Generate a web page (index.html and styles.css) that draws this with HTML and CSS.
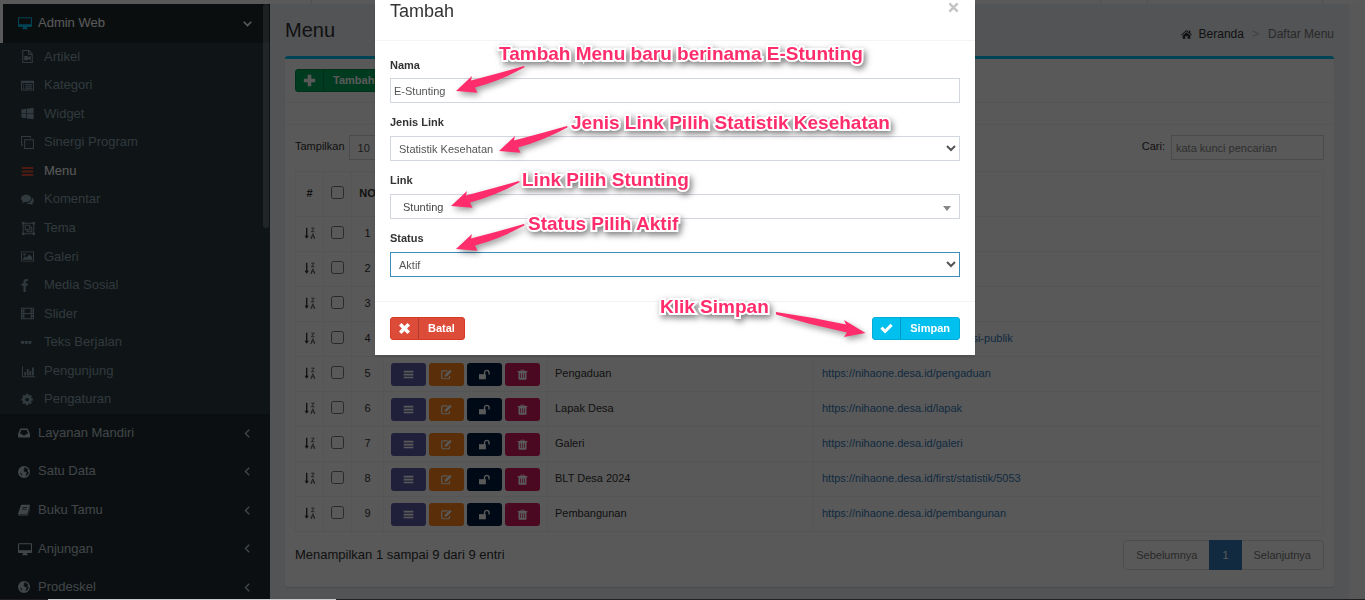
FILE: index.html
```html
<!DOCTYPE html>
<html lang="id">
<head>
    <meta charset="UTF-8">
    <meta name="viewport" content="width=device-width, initial-scale=1.0">
    <title>Menu</title>

    <link rel="stylesheet" href="styles.css">
</head>
<body>
    <!-- Kumpulan ikon -->
    <svg class="sprite" aria-hidden="true">
        <symbol id="i-desktop" viewBox="0 0 16 16"><path fill-rule="evenodd" d="M1.2 1.5h13.6c.7 0 1.2.5 1.2 1.2v8.6c0 .7-.5 1.2-1.2 1.2H10l.5 1.5h.6v1H4.9v-1h.6l.5-1.5H1.2C.5 12.500 0 12 0 11.300V2.700C0 2 .5 1.500 1.200 1.500zM1.200 2.700v6.600h13.600V2.700z"/></symbol>
        <symbol id="i-video" viewBox="0 0 16 16"><path fill-rule="evenodd" d="M1.500 0H10l4.500 4.500V16h-13zM2.800 1.300v13.400h10.400V6H8.700V1.300zM10 1.800v2.900h2.900zM4 7.500h4.700v1.600L12 7v6l-3.300-2.100v1.600H4z"/></symbol>
        <symbol id="i-list" viewBox="0 0 16 16"><path fill-rule="evenodd" d="M0 2h16v12H0zM1.200 5v7.800h13.600V5zM2.300 6h1.500v1.300H2.300zM5 6h8.700v1.300H5zM2.300 8.300h1.500v1.300H2.300zM5 8.300h8.700v1.300H5zM2.300 10.600h1.500v1.300H2.300zM5 10.600h8.700v1.300H5z"/></symbol>
        <symbol id="i-windows" viewBox="0 0 16 16"><path d="M.5 3l6-.9v5.500h-6zM7.300 2l8.200-1.200v6.800H7.300zM.5 8.400h6v5.500l-6-.9zM7.300 8.400h8.200v6.800L7.300 14z"/></symbol>
        <symbol id="i-clone" viewBox="0 0 16 16"><path fill="none" stroke="currentColor" stroke-width="1.300" d="M4.500 4.500h10.800v10.800H4.500zM2.500 11.500H.7V.7h10.800v2"/></symbol>
        <symbol id="i-bars" viewBox="0 0 16 16"><path d="M1 2.500h14v2.500H1zM1 6.800h14v2.500H1zM1 11.100h14v2.500H1z"/></symbol>
        <symbol id="i-comments" viewBox="0 0 16 16"><path d="M6.300 2C9.800 2 12.600 4 12.600 6.600s-2.800 4.600-6.300 4.600l-1.500-.1C3.700 12 2.400 12.500 1 12.600c.8-.7 1.200-1.500 1.300-2.300C.9 9.500 0 8.100 0 6.600 0 4 2.800 2 6.300 2z"/><path d="M13.600 5.800c1.500.8 2.400 2 2.400 3.400s-.9 2.600-2.200 3.400c.1.800.5 1.500 1.200 2.200-1.400-.1-2.600-.6-3.700-1.400-2 .3-3.900-.1-5.200-1.100 4.200.1 7.500-2.400 7.500-6.500z"/></symbol>
        <symbol id="i-group" viewBox="0 0 16 16"><path fill="none" stroke="currentColor" stroke-width="1.300" d="M1.500 1.500h13v13h-13zM4 4h5.500v5.500H4zM9.500 6.500H12V12H6.500V9.500"/><path d="M0 0h3v3H0zM13 0h3v3h-3zM0 13h3v3H0zM13 13h3v3h-3z"/></symbol>
        <symbol id="i-image" viewBox="0 0 16 16"><path fill-rule="evenodd" d="M0 1.700h16v12.600H0zM1.200 2.900v10.200h13.600V2.900zM2.300 10.500l2.500-2.700 1.600 1.600 3.800-4 3.500 3.500V12H2.300z"/><circle cx="4.200" cy="5.400" r="1.500"/></symbol>
        <symbol id="i-facebook" viewBox="0 0 16 16"><path d="M8.500.2v2.500H7.100c-1 0-1.300.5-1.300 1.200v1.700h2.600L8 8.300H5.800V16H3V8.300H.8V5.600H3V3.500C3 1.300 4.400 0 6.500 0z"/></symbol>
        <symbol id="i-film" viewBox="0 0 16 16"><path fill-rule="evenodd" d="M0 1h16v14H0zM1.200 2.200v1.600h1.600V2.200zM1.200 5.400V7h1.600V5.400zM1.200 9v1.600h1.600V9zM1.200 12.200v1.600h1.600v-1.600zM13.200 2.200v1.600h1.600V2.200zM13.200 5.400V7h1.600V5.400zM13.200 9v1.600h1.600V9zM13.200 12.200v1.600h1.600v-1.600zM4.200 2.200v5.200h7.600V2.200zM4.200 8.600v5.200h7.600V8.600z"/></symbol>
        <symbol id="i-dots" viewBox="0 0 16 16"><path d="M0 6h3.600v3.600H0zM4.600 6h3.600v3.600H4.600zM9.200 6h3.600v3.600H9.200z"/></symbol>
        <symbol id="i-chart" viewBox="0 0 16 16"><path d="M0 1.500h1.200v12.300H16V15H0zM2.800 9H5v4H2.800zM6 5h2.200v8H6zM9.200 7.300h2.200V13H9.200zM12.300 3h2.200v10h-2.200z"/></symbol>
        <symbol id="i-gear" viewBox="0 0 16 16"><circle cx="7.500" cy="8" r="4" fill="none" stroke="currentColor" stroke-width="3.400"/><path fill="none" stroke="currentColor" stroke-width="2.800" d="M7.500 1v2.500M7.500 12.500V15M.5 8H3M12 8h2.500M2.500 3l1.900 1.900M10.600 11.100l1.900 1.900M12.500 3l-1.900 1.900M4.400 11.100L2.500 13"/></symbol>
        <symbol id="i-inbox" viewBox="0 0 16 16"><path fill-rule="evenodd" d="M3.200 2h9.600L16 9v4.200c0 .5-.3.800-.8.800H.8c-.5 0-.8-.3-.8-.8V9zM4.500 4L2.300 9H5l1 2h4l1-2h2.700l-2.200-5z"/></symbol>
        <symbol id="i-globe" viewBox="0 0 16 16"><path fill-rule="evenodd" d="M8 0a8 8 0 110 16A8 8 0 018 0zM9.500 1.800L7.500 3l1.200 1-1.500 2.200L9.500 8l2.300.8L10.500 12l-.8 1.800 3.300-2 1.500-3.300-2-1.500 1-2.500zM2.500 9.500l1.300 1.300.7 2.200 1-2.200L4 9z"/></symbol>
        <symbol id="i-book" viewBox="0 0 16 16"><path fill-rule="evenodd" d="M5.500 1h10c.5.300.6.700.4 1.200l-3.300 10.300c-.2.600-.6 1-1.200 1H2.800c-.6 0-1 .2-1 .7h10.500c.4 0 .7-.3.900-.700L15.600 5.500c.4.500.5.900.3 1.400l-2.600 7.600c-.2.600-.7.900-1.300.9H2.300C.9 15.400-.2 14 .2 12.700L3.500 2.800C3.900 1.700 4.400 1 5.500 1zM6.200 4l-.3 1h6l.3-1zM5.500 6.300l-.3 1h6l.3-1z"/></symbol>
        <symbol id="i-left" viewBox="0 0 16 16"><path fill="none" stroke="currentColor" stroke-width="2" d="M10.500 2.500L5 8l5.500 5.500"/></symbol>
        <symbol id="i-down" viewBox="0 0 16 16"><path fill="none" stroke="currentColor" stroke-width="2.400" d="M2.500 5.500L8 11l5.500-5.500"/></symbol>
        <symbol id="i-home" viewBox="0 0 16 16"><path d="M8 1.500l3.500 3V2.200h2v4L16 8.400l-.9 1L8 3.400.9 9.400 0 8.400zM8 4.700l5.500 4.600V14H9.600v-3.700H6.400V14H2.500V9.300z"/></symbol>
        <symbol id="i-plus" viewBox="0 0 16 16"><path d="M5.800 1h4.400v4.800H15v4.400h-4.800V15H5.800v-4.800H1V5.800h4.800z"/></symbol>
        <symbol id="i-times" viewBox="0 0 16 16"><path d="M4.300 1.200L8 4.900l3.700-3.700 3.100 3.100L11.100 8l3.700 3.700-3.100 3.100L8 11.100l-3.700 3.700-3.100-3.100L4.900 8 1.200 4.300z"/></symbol>
        <symbol id="i-close" viewBox="0 0 16 16"><path fill="none" stroke="currentColor" stroke-width="3.500" d="M2 2l12 12M14 2L2 14"/></symbol>
        <symbol id="i-check" viewBox="0 0 16 16"><path d="M.4 8.300l2.700-2.700 3.200 3.200 6.600-6.600 2.700 2.700-9.300 9.300z"/></symbol>
        <symbol id="i-edit" viewBox="0 0 16 16"><path fill="none" stroke="currentColor" stroke-width="1.700" d="M9.500 2.800H3C1.700 2.800 1 3.600 1 4.800v7.400c0 1.200.7 2 2 2h7.400c1.200 0 2-.8 2-2V10"/><path d="M12.900 1l2.700 2.700-7.200 7.200-3.200.5.500-3.200z"/></symbol>
        <symbol id="i-unlock" viewBox="0 0 16 16"><path d="M0 7.500h10V15H0z"/><path fill="none" stroke="currentColor" stroke-width="2" d="M8 8V5.200C8 3.200 9.400 2 11.300 2s3.300 1.200 3.300 3.200V8"/></symbol>
        <symbol id="i-trash" viewBox="0 0 16 16"><path fill-rule="evenodd" d="M5.500 1h5l.7 2H15v1.700h-1.200V14c0 .9-.6 1.500-1.400 1.500H3.600c-.8 0-1.400-.6-1.400-1.500V4.700H1V3h3.800zM6.500 2.200L6.200 3h3.600l-.3-.8zM4.500 6v7.200h1V6zM7.500 6v7.200h1V6zM10.500 6v7.200h1V6z"/></symbol>
        <symbol id="i-sort" viewBox="0 0 16 16"><path d="M2.700 1h1.800v10.500h2L3.600 15.500.7 11.500h2z"/><path fill="none" stroke="currentColor" stroke-width="1" d="M9.700 1.500h3.800L10 6.300h3.900M9.300 15l2.500-6 2.500 6M10.300 13h3M8.800 15h1.800M13 15h1.800"/></symbol>
        <symbol id="i-arrow" viewBox="0 0 80 40"><path d="M5 30L21 15 20 19.500Q47 12.500 73 5L73.700 6.300Q50 19.500 24 26.500L26.500 31.700z"/></symbol>
        <symbol id="i-arrow-right" viewBox="0 0 100 40"><path d="M5 7Q40 12 75 19.500L73 15 94.500 28 73 32 76 27.500Q40 20 5 9.500z"/></symbol>
    </svg>

    <header class="navbar">
        <span class="nav-menu"></span>
        <span class="nav-gap"></span>
        <span class="nav-notif"></span>
        <span class="nav-user"></span>
    </header>

    <div class="wrapper">
        <!-- Menu samping -->
        <nav class="sidebar">
            <a href="#" class="side-link open">
                <svg class="icon"><use href="#i-desktop"/></svg><span>Admin Web</span>
                <svg class="angle"><use href="#i-down"/></svg>
            </a>
            <ul class="submenu">
                <li><a href="#"><svg class="icon"><use href="#i-video"/></svg>Artikel</a></li>
                <li><a href="#"><svg class="icon"><use href="#i-list"/></svg>Kategori</a></li>
                <li><a href="#"><svg class="icon"><use href="#i-windows"/></svg>Widget</a></li>
                <li><a href="#"><svg class="icon"><use href="#i-clone"/></svg>Sinergi Program</a></li>
                <li><a href="#" class="active"><svg class="icon"><use href="#i-bars"/></svg>Menu</a></li>
                <li><a href="#"><svg class="icon"><use href="#i-comments"/></svg>Komentar</a></li>
                <li><a href="#"><svg class="icon wide"><use href="#i-group"/></svg>Tema</a></li>
                <li><a href="#"><svg class="icon"><use href="#i-image"/></svg>Galeri</a></li>
                <li><a href="#"><svg class="icon"><use href="#i-facebook"/></svg>Media Sosial</a></li>
                <li><a href="#"><svg class="icon"><use href="#i-film"/></svg>Slider</a></li>
                <li><a href="#"><svg class="icon"><use href="#i-dots"/></svg>Teks Berjalan</a></li>
                <li><a href="#"><svg class="icon wide"><use href="#i-chart"/></svg>Pengunjung</a></li>
                <li><a href="#"><svg class="icon"><use href="#i-gear"/></svg>Pengaturan</a></li>
            </ul>
            <a href="#" class="side-link">
                <svg class="icon"><use href="#i-inbox"/></svg><span>Layanan Mandiri</span>
                <svg class="angle"><use href="#i-left"/></svg>
            </a>
            <a href="#" class="side-link">
                <svg class="icon"><use href="#i-globe"/></svg><span>Satu Data</span>
                <svg class="angle"><use href="#i-left"/></svg>
            </a>
            <a href="#" class="side-link">
                <svg class="icon"><use href="#i-book"/></svg><span>Buku Tamu</span>
                <svg class="angle"><use href="#i-left"/></svg>
            </a>
            <a href="#" class="side-link">
                <svg class="icon wide"><use href="#i-desktop"/></svg><span>Anjungan</span>
                <svg class="angle"><use href="#i-left"/></svg>
            </a>
            <a href="#" class="side-link">
                <svg class="icon"><use href="#i-globe"/></svg><span>Prodeskel</span>
                <svg class="angle"><use href="#i-left"/></svg>
            </a>
            <div class="side-scroll"></div>
        </nav>

        <main class="content">
            <div class="content-header">
                <h1>Menu</h1>
                <ol class="breadcrumb">
                    <li><a href="#"><svg class="icon"><use href="#i-home"/></svg>Beranda</a></li>
                    <li>Daftar Menu</li>
                </ol>
            </div>

            <div class="box">
                <div class="box-header">
                    <button type="button" class="btn btn-success"><span class="btn-icon"><svg><use href="#i-plus"/></svg></span><span class="btn-text">Tambah</span></button>
                </div>
                <div class="box-filter"></div>
                <div class="box-body">
                    <div class="toolbar">
                        <label><span>Tampilkan</span>
                            <select class="form-control length"><option>10</option></select>
                        </label>
                        <label><span>Cari:</span>
                            <input type="search" class="form-control search" placeholder="kata kunci pencarian">
                        </label>
                    </div>

                    <table>
                        <thead>
                            <tr>
                                <th class="col-sort">#</th>
                                <th class="col-check"><input type="checkbox" aria-label="Pilih semua"></th>
                                <th class="col-no">NO</th>
                                <th class="col-aksi"></th>
                                <th class="col-nama"></th>
                                <th></th>
                            </tr>
                        </thead>
                        <tbody>
                            <tr>
                                <td><svg class="sort"><use href="#i-sort"/></svg></td>
                                <td><input type="checkbox" aria-label="Pilih 1"></td>
                                <td>1</td><td></td><td></td><td></td>
                            </tr>
                            <tr>
                                <td><svg class="sort"><use href="#i-sort"/></svg></td>
                                <td><input type="checkbox" aria-label="Pilih 2"></td>
                                <td>2</td><td></td><td></td><td></td>
                            </tr>
                            <tr>
                                <td><svg class="sort"><use href="#i-sort"/></svg></td>
                                <td><input type="checkbox" aria-label="Pilih 3"></td>
                                <td>3</td><td></td><td></td><td></td>
                            </tr>
                            <tr>
                                <td><svg class="sort"><use href="#i-sort"/></svg></td>
                                <td><input type="checkbox" aria-label="Pilih 4"></td>
                                <td>4</td><td></td><td></td>
                                <td><a href="#">https://nihaone.desa.id/informasi-publik</a></td>
                            </tr>
                            <tr>
                                <td><svg class="sort"><use href="#i-sort"/></svg></td>
                                <td><input type="checkbox" aria-label="Pilih 5"></td>
                                <td>5</td>
                                <td>
                                    <div class="aksi">
                                        <button type="button" class="bg-purple" aria-label="Submenu"><svg><use href="#i-bars"/></svg></button>
                                        <button type="button" class="bg-orange" aria-label="Ubah"><svg><use href="#i-edit"/></svg></button>
                                        <button type="button" class="bg-navy" aria-label="Kunci"><svg><use href="#i-unlock"/></svg></button>
                                        <button type="button" class="bg-maroon" aria-label="Hapus"><svg><use href="#i-trash"/></svg></button>
                                    </div>
                                </td>
                                <td>Pengaduan</td>
                                <td><a href="#">https://nihaone.desa.id/pengaduan</a></td>
                            </tr>
                            <tr>
                                <td><svg class="sort"><use href="#i-sort"/></svg></td>
                                <td><input type="checkbox" aria-label="Pilih 6"></td>
                                <td>6</td>
                                <td>
                                    <div class="aksi">
                                        <button type="button" class="bg-purple" aria-label="Submenu"><svg><use href="#i-bars"/></svg></button>
                                        <button type="button" class="bg-orange" aria-label="Ubah"><svg><use href="#i-edit"/></svg></button>
                                        <button type="button" class="bg-navy" aria-label="Kunci"><svg><use href="#i-unlock"/></svg></button>
                                        <button type="button" class="bg-maroon" aria-label="Hapus"><svg><use href="#i-trash"/></svg></button>
                                    </div>
                                </td>
                                <td>Lapak Desa</td>
                                <td><a href="#">https://nihaone.desa.id/lapak</a></td>
                            </tr>
                            <tr>
                                <td><svg class="sort"><use href="#i-sort"/></svg></td>
                                <td><input type="checkbox" aria-label="Pilih 7"></td>
                                <td>7</td>
                                <td>
                                    <div class="aksi">
                                        <button type="button" class="bg-purple" aria-label="Submenu"><svg><use href="#i-bars"/></svg></button>
                                        <button type="button" class="bg-orange" aria-label="Ubah"><svg><use href="#i-edit"/></svg></button>
                                        <button type="button" class="bg-navy" aria-label="Kunci"><svg><use href="#i-unlock"/></svg></button>
                                        <button type="button" class="bg-maroon" aria-label="Hapus"><svg><use href="#i-trash"/></svg></button>
                                    </div>
                                </td>
                                <td>Galeri</td>
                                <td><a href="#">https://nihaone.desa.id/galeri</a></td>
                            </tr>
                            <tr>
                                <td><svg class="sort"><use href="#i-sort"/></svg></td>
                                <td><input type="checkbox" aria-label="Pilih 8"></td>
                                <td>8</td>
                                <td>
                                    <div class="aksi">
                                        <button type="button" class="bg-purple" aria-label="Submenu"><svg><use href="#i-bars"/></svg></button>
                                        <button type="button" class="bg-orange" aria-label="Ubah"><svg><use href="#i-edit"/></svg></button>
                                        <button type="button" class="bg-navy" aria-label="Kunci"><svg><use href="#i-unlock"/></svg></button>
                                        <button type="button" class="bg-maroon" aria-label="Hapus"><svg><use href="#i-trash"/></svg></button>
                                    </div>
                                </td>
                                <td>BLT Desa 2024</td>
                                <td><a href="#">https://nihaone.desa.id/first/statistik/5053</a></td>
                            </tr>
                            <tr>
                                <td><svg class="sort"><use href="#i-sort"/></svg></td>
                                <td><input type="checkbox" aria-label="Pilih 9"></td>
                                <td>9</td>
                                <td>
                                    <div class="aksi">
                                        <button type="button" class="bg-purple" aria-label="Submenu"><svg><use href="#i-bars"/></svg></button>
                                        <button type="button" class="bg-orange" aria-label="Ubah"><svg><use href="#i-edit"/></svg></button>
                                        <button type="button" class="bg-navy" aria-label="Kunci"><svg><use href="#i-unlock"/></svg></button>
                                        <button type="button" class="bg-maroon" aria-label="Hapus"><svg><use href="#i-trash"/></svg></button>
                                    </div>
                                </td>
                                <td>Pembangunan</td>
                                <td><a href="#">https://nihaone.desa.id/pembangunan</a></td>
                            </tr>
                        </tbody>
                    </table>

                    <div class="table-footer">
                        <span>Menampilkan 1 sampai 9 dari 9 entri</span>
                        <div class="pagination">
                            <a href="#">Sebelumnya</a>
                            <a href="#" class="active">1</a>
                            <a href="#">Selanjutnya</a>
                        </div>
                    </div>
                </div>
            </div>
        </main>
    </div>

    <div class="taskbar"><span></span></div>

    <div class="backdrop"></div>

    <!-- Dialog tambah menu -->
    <div class="modal">
        <form class="dialog">
            <div class="modal-header">
                <h4>Tambah</h4>
                <button type="button" class="close" aria-label="Tutup"><svg><use href="#i-close"/></svg></button>
            </div>
            <div class="modal-body">
                <div class="form-group">
                    <label for="nama">Nama</label>
                    <input type="text" id="nama" class="form-control" value="E-Stunting">
                </div>
                <div class="form-group">
                    <label for="jenis">Jenis Link</label>
                    <select id="jenis" class="form-control"><option>Statistik Kesehatan</option></select>
                </div>
                <div class="form-group">
                    <label for="link">Link</label>
                    <div class="select2">
                        <select id="link" class="form-control"><option>Stunting</option></select>
                    </div>
                </div>
                <div class="form-group">
                    <label for="status">Status</label>
                    <select id="status" class="form-control focus"><option>Aktif</option></select>
                </div>
            </div>
            <div class="modal-footer">
                <button type="reset" class="btn btn-danger"><span class="btn-icon"><svg><use href="#i-times"/></svg></span><span class="btn-text">Batal</span></button>
                <button type="submit" class="btn btn-info"><span class="btn-icon"><svg><use href="#i-check"/></svg></span><span class="btn-text">Simpan</span></button>
            </div>

            <!-- Petunjuk di atas dialog -->
            <div class="note note-nama">Tambah Menu baru berinama E-Stunting</div>
            <div class="note note-jenis">Jenis Link Pilih Statistik Kesehatan</div>
            <div class="note note-link">Link Pilih Stunting</div>
            <div class="note note-status">Status Pilih Aktif</div>
            <div class="note note-simpan">Klik Simpan</div>
            <svg class="arrow arrow-nama"><use href="#i-arrow"/></svg>
            <svg class="arrow arrow-jenis"><use href="#i-arrow"/></svg>
            <svg class="arrow arrow-link"><use href="#i-arrow"/></svg>
            <svg class="arrow arrow-status"><use href="#i-arrow"/></svg>
            <svg class="arrow arrow-simpan"><use href="#i-arrow-right"/></svg>
        </form>
    </div>
</body>
</html>
```
FILE: styles.css
```css
* {
    box-sizing: border-box;
}
body {
    margin: 0;
    height: 100vh;
    overflow: hidden;
    display: flex;
    flex-direction: column;
    background: #fdfdfd;
    color: #333;
    font-family: "Liberation Sans", Arial, sans-serif;
    font-size: 13px;
    line-height: 1.42857;
}
a {
    color: #337ab7;
    text-decoration: none;
}
svg {
    fill: currentColor;
    flex: none;
}
.sprite {
    position: absolute;
    width: 0;
    height: 0;
}

/* Bilah atas */
.navbar {
    display: flex;
    flex: none;
    height: 4px;
    padding-left: 270px;
    background: #fff;
}
.navbar span {
    border-right: 1px solid #e4e4e4;
}
.nav-menu {
    width: 42px;
}
.nav-gap {
    flex: 1;
}
.nav-notif {
    width: 47px;
}
.nav-user {
    width: 175px;
    margin-right: 42px;
}

.wrapper {
    display: flex;
    flex: 1;
    min-height: 0;
    padding-right: 16px;
}

/* Menu samping */
.sidebar {
    position: relative;
    flex: none;
    width: 270px;
    overflow: hidden;
    background: #222d32;
}
.side-link {
    display: flex;
    align-items: center;
    padding: 10px 17px 10px 15px;
    border-left: 3px solid transparent;
    color: #b8c7ce;
}
.side-link.open {
    background: #1e282c;
    border-left-color: #fff;
    color: #fff;
}
.side-link.open .icon {
    color: #00c0ef;
}
.side-link .icon {
    width: 12px;
    height: 14px;
    margin-right: 8px;
}
.side-link .icon.wide,
.side-link.open .icon {
    width: 14px;
    margin-right: 6px;
}
.side-link .angle {
    width: 11px;
    height: 11px;
    margin-left: auto;
}
.submenu {
    margin: 0;
    padding: 0 0 0 1px;
    list-style: none;
    background: #2c3b41;
}
.submenu a {
    display: flex;
    align-items: center;
    padding: 5px 5px 5px 20px;
    color: #8aa4af;
}
.submenu a.active {
    color: #fff;
}
.submenu .icon {
    width: 13px;
    height: 13px;
    margin-right: 10px;
}
.submenu .icon.wide {
    width: 15px;
    margin-right: 8px;
}
.submenu .active .icon {
    color: #dd4b39;
}
.side-scroll {
    position: absolute;
    top: 0;
    right: 1px;
    width: 6px;
    height: 224px;
    border-radius: 3px;
    background: rgba(255, 255, 255, 0.25);
}

/* Isi halaman */
.content {
    flex: 1;
    padding: 0 15px;
    background: #ecf0f5;
}
.content-header {
    display: flex;
    align-items: center;
    justify-content: space-between;
    height: 52px;
}
.content-header h1 {
    margin: 0;
    font-size: 20px;
    font-weight: normal;
}
.breadcrumb {
    display: flex;
    margin: 0;
    padding: 9px 0 0;
    list-style: none;
    font-size: 12px;
    color: #777;
}
.breadcrumb li + li::before {
    content: ">";
    padding: 0 9px 0 8px;
    color: #bbb;
}
.breadcrumb a {
    display: flex;
    align-items: center;
    color: #333;
}
.breadcrumb .icon {
    width: 11px;
    height: 11px;
    margin-right: 7px;
}
.box {
    border-top: 3px solid #00c0ef;
    border-radius: 3px;
    background: #fff;
    box-shadow: 0 1px 1px rgba(0, 0, 0, 0.1);
}
.box-header {
    padding: 10px;
    border-bottom: 1px solid #f4f4f4;
}
.box-filter {
    height: 22px;
    border-bottom: 1px solid #f4f4f4;
}
.box-body {
    padding: 10px 10px 17px;
}
.toolbar {
    display: flex;
    justify-content: space-between;
    margin-bottom: 11px;
    font-size: 11px;
}
.toolbar label {
    display: flex;
    gap: 4px;
    line-height: 22px;
}

/* Kontrol form */
.form-control {
    width: 100%;
    height: 25px;
    padding: 1px 4px;
    border: 1px solid #d2d6de;
    border-radius: 0;
    background: #fff;
    color: #555;
    font-family: inherit;
    font-size: 11px;
}
.form-control.focus {
    border-color: #3c8dbc;
}
.form-control.length {
    width: 60px;
}
.form-control.search {
    width: 153px;
    margin-left: 2px;
}
.form-control::placeholder {
    color: #888;
}
.select2 {
    position: relative;
}
.select2 .form-control {
    appearance: none;
    padding: 1px 12px;
    color: #444;
}
.select2::after {
    content: "";
    position: absolute;
    top: 12px;
    right: 9px;
    border: 4px solid transparent;
    border-top: 5px solid #888;
    border-bottom: 0;
}

/* Tombol */
.btn {
    display: flex;
    height: 23px;
    padding: 0;
    border: 1px solid;
    border-radius: 3px;
    color: #fff;
    font-family: inherit;
    font-size: 11px;
    font-weight: bold;
}
.btn-icon {
    display: flex;
    align-items: center;
    justify-content: center;
    width: 28px;
    height: 21px;
    border-right: 1px solid rgba(0, 0, 0, 0.2);
}
.btn-icon svg {
    width: 13px;
    height: 13px;
}
.btn-text {
    padding: 0 9px;
    line-height: 21px;
}
.btn-success {
    background: #00a65a;
    border-color: #008d4c;
}
.btn-danger {
    background: #dd4b39;
    border-color: #d73925;
}
.btn-info {
    background: #00c0ef;
    border-color: #00acd6;
}

/* Tabel */
table {
    width: 100%;
    border-collapse: collapse;
    table-layout: fixed;
    font-size: 11px;
}
th, td {
    height: 35px;
    padding: 0 7px;
    border: 1px solid #f4f4f4;
    text-align: left;
}
th {
    height: 45px;
}
th:nth-child(-n+3),
td:nth-child(-n+3) {
    padding: 0;
    text-align: center;
}
td a {
    padding-left: 1px;
}
.col-sort,
.col-check {
    width: 28px;
}
.col-no {
    width: 32px;
}
.col-aksi {
    width: 164px;
}
.col-nama {
    width: 266px;
}
table input {
    display: block;
    width: 13px;
    height: 13px;
    margin: 0 auto 3px;
}
.sort {
    display: block;
    width: 12px;
    height: 12px;
    margin: 0 auto 2px;
}
.aksi {
    display: flex;
    gap: 3px;
}
.aksi button {
    display: flex;
    align-items: center;
    justify-content: center;
    width: 35px;
    height: 23px;
    padding: 0;
    border: 0;
    border-radius: 3px;
    color: #fff;
}
.aksi svg {
    width: 11px;
    height: 11px;
}
.bg-purple {
    background: #605ca8;
}
.bg-orange {
    background: #ff851b;
}
.bg-navy {
    background: #001f3f;
}
.bg-maroon {
    background: #d81b60;
}
.table-footer {
    display: flex;
    justify-content: space-between;
    padding-top: 8px;
}
.table-footer span {
    padding-top: 6px;
}
.pagination {
    display: flex;
    border: 1px solid #ddd;
    border-radius: 4px;
    font-size: 11px;
}
.pagination a {
    padding: 0 12px;
    line-height: 28px;
    color: #777;
}
.pagination .active {
    margin: -1px 0;
    padding: 1px 13px;
    background: #337ab7;
    color: #fff;
}

.taskbar {
    flex: none;
    height: 1px;
    padding-left: 48px;
    background: #221f22;
}
.taskbar span {
    display: block;
    width: 288px;
    height: 1px;
    background: #ccc;
}

/* Dialog */
.backdrop {
    position: fixed;
    inset: 0 0 1px;
    background: rgba(0, 0, 0, 0.65);
}
.modal {
    position: fixed;
    inset: 0 15px auto 0;
}
.dialog {
    position: relative;
    max-width: 600px;
    margin: 0 auto;
    background: #fff;
    box-shadow: 0 2px 3px rgba(0, 0, 0, 0.125);
}
.modal-header {
    display: flex;
    align-items: flex-start;
    justify-content: space-between;
    height: 41px;
    padding: 0 15px;
    border-bottom: 1px solid #f4f4f4;
}
.modal-header h4 {
    margin: 0;
    font-size: 18px;
    font-weight: normal;
    line-height: 22px;
}
.close {
    margin: 0;
    padding: 2px 1px;
    border: 0;
    background: none;
    color: #c4c4c4;
}
.close svg {
    display: block;
    width: 11px;
    height: 11px;
}
.modal-body {
    padding: 15px;
}
.form-group {
    margin-bottom: 10px;
}
.form-group:last-child {
    margin-bottom: 9px;
}
.form-group label {
    display: block;
    margin-bottom: 4px;
    font-size: 11px;
    font-weight: bold;
    line-height: 18px;
}
.form-group .form-control {
    display: block;
}
.form-group + .form-group label {
    margin-bottom: 5px;
}
.form-group input.form-control {
    padding-left: 3px;
}
.modal-footer {
    display: flex;
    justify-content: space-between;
    padding: 15px;
    border-top: 1px solid #f4f4f4;
}
.modal-footer .btn-info .btn-text {
    padding: 0 9px;
}

/* Petunjuk */
.note {
    position: absolute;
    color: #ff2d6b;
    font-size: 19px;
    font-weight: bold;
    line-height: 22px;
    white-space: nowrap;
    -webkit-text-stroke: 4px #fff;
    paint-order: stroke fill;
    filter: drop-shadow(2px 3px 3px rgba(0, 0, 0, 0.5));
}
.note-nama {
    left: 124px;
    top: 43px;
}
.note-jenis {
    left: 196px;
    top: 112px;
}
.note-link {
    left: 147px;
    top: 169px;
}
.note-status {
    left: 153px;
    top: 213px;
}
.note-simpan {
    left: 285px;
    top: 296px;
}
.arrow {
    position: absolute;
    width: 80px;
    height: 40px;
    color: #ff2d6b;
    filter: drop-shadow(2px 3px 3px rgba(0, 0, 0, 0.4));
}
.arrow-nama {
    left: 76px;
    top: 61px;
}
.arrow-jenis {
    left: 119px;
    top: 121px;
}
.arrow-link {
    left: 71px;
    top: 176px;
}
.arrow-status {
    left: 76px;
    top: 219px;
}
.arrow-simpan {
    left: 396px;
    top: 305px;
    width: 100px;
}
```
